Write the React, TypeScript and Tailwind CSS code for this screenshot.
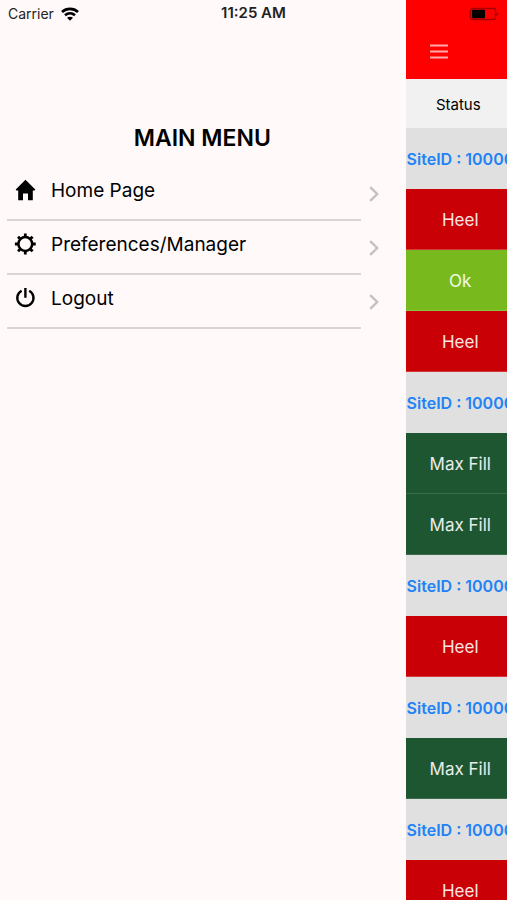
import type { ReactNode } from "react";

type Row = { kind: "site" | "heel" | "ok" | "max"; label: string };

const site: Row = { kind: "site", label: "SiteID : 10000" };
const heel: Row = { kind: "heel", label: "Heel" };
const ok: Row = { kind: "ok", label: "Ok" };
const max: Row = { kind: "max", label: "Max Fill" };

const rows: Row[] = [site, heel, ok, heel, site, max, max, site, heel, site, max, site, heel];

const tone: Record<Row["kind"], string> = {
  site: "bg-[#e0e0e0] pl-px text-left text-base font-semibold text-[#2182f5]",
  heel: "border-[#d33a3a] bg-[#c90005] pt-1 pl-2 text-center text-[17px] text-white/90",
  ok: "border-[#8cc63f] bg-[#78ba1e] pt-1 pl-2 text-center text-[17px] text-white/90",
  max: "border-[#3c6d4b] bg-[#1f5632] pt-1 pl-2 text-center text-[17px] text-white/90",
};

function HomeIcon() {
  return (
    <svg viewBox="0 0 22 22" className="size-[22px]" fill="currentColor" aria-hidden="true">
      <path d="M11.5.8 21.3 10.4 20.6 11.4H18.8V21.2H14V14.4H9V21.2H4.2V11.4H2.4L1.7 10.4z" />
    </svg>
  );
}

function GearIcon() {
  return (
    <svg viewBox="0 0 22 22" className="size-[22px]" fill="none" stroke="currentColor" aria-hidden="true">
      <circle cx="11.3" cy="11" r="6.9" strokeWidth="2.5" />
      <path
        strokeWidth="2.8"
        d="M11.3.6v3.6M11.3 17.8v3.6M.9 11h3.6M18.1 11h3.6M4 3.7l2.4 2.4M16.2 15.9l2.4 2.4M4 18.3l2.4-2.4M16.2 6.1l2.4-2.4"
      />
    </svg>
  );
}

function PowerIcon() {
  return (
    <svg viewBox="0 0 22 22" className="size-[22px]" fill="none" stroke="currentColor" strokeWidth="2.4" aria-hidden="true">
      <path d="M7.6 3.7a8.1 8.1 0 1 0 7.6 0M11.4 1v9.8" />
    </svg>
  );
}

function MenuItem({ icon, label }: { icon: ReactNode; label: string }) {
  return (
    <li>
      <a href="#" className="flex h-[54px] items-stretch">
        <span className="flex grow items-start gap-[15px] border-b-2 border-[#d9d5d5] pt-3 pl-[7px]">
          {icon}
          <span className="text-[19px] leading-6">{label}</span>
        </span>
        <svg
          viewBox="0 0 10 16"
          className="mt-[19px] mr-[27px] ml-2 h-4 w-[10px]"
          fill="none"
          stroke="#c4c1c1"
          strokeWidth="2.4"
          aria-hidden="true"
        >
          <path d="M1.2 1.2 8.2 8 1.2 14.8" />
        </svg>
      </a>
    </li>
  );
}

function StatusBar() {
  return (
    <div className="absolute inset-x-0 top-0 grid h-[27px] grid-cols-3 items-center px-2 text-[#222]">
      <span className="flex items-center gap-[7px] text-sm">
        Carrier
        <svg viewBox="0 0 18 14" className="h-[14px] w-[18px]" fill="none" stroke="#000" aria-label="Wi-Fi">
          <path strokeWidth="2.7" d="M1 4.9C5.5.8 12.5.8 17 4.9M4 8.3c2.9-2.5 7.1-2.5 10 0" />
          <path fill="#000" stroke="none" d="M9 13.8 6 10.8c1.7-1.5 4.3-1.5 6 0z" />
        </svg>
      </span>
      <time className="text-center text-[15px] font-semibold">11:25 AM</time>
      <svg viewBox="0 0 30 14" className="h-[14px] w-[30px] justify-self-end" aria-label="Battery">
        <rect x="1.5" y="1.5" width="25" height="11" rx="2" fill="none" stroke="#a80000" strokeWidth="1.4" />
        <rect x="3" y="2.8" width="13" height="8.4" rx="1" fill="#000" />
        <path d="M27.4 4.5 29.6 7l-2.2 2.5z" fill="#a80000" />
      </svg>
    </div>
  );
}

export default function App() {
  return (
    <div className="relative flex h-screen overflow-hidden bg-[#fff9f9] font-['Inter',sans-serif] text-black">
      <nav className="w-4/5 shrink-0 pt-[122px] pl-[7px]" aria-label="Main menu">
        <h1 className="pr-2 text-center text-[23px] leading-8 font-semibold">MAIN MENU</h1>
        <ul className="mt-[13px]">
          <MenuItem icon={<HomeIcon />} label="Home Page" />
          <MenuItem icon={<GearIcon />} label="Preferences/Manager" />
          <MenuItem icon={<PowerIcon />} label="Logout" />
        </ul>
      </nav>
      <main className="min-w-0 grow overflow-hidden">
        <header className="h-[79px] bg-[#ff0000] pt-[44px] pl-6">
          <button type="button" aria-label="Toggle menu" className="block">
            <svg viewBox="0 0 18 16" className="h-4 w-[18px]" stroke="#ffaaaa" strokeWidth="2" aria-hidden="true">
              <path d="M0 1.5h18M0 7.5h18M0 13.5h18" />
            </svg>
          </button>
        </header>
        <table className="w-full table-fixed border-separate border-spacing-0">
          <thead>
            <tr>
              <th className="h-[49px] bg-[#f1f1f1] p-0 pt-1 pl-1 text-center text-[15px] font-normal">Status</th>
            </tr>
          </thead>
          <tbody>
            {rows.map((row, i) => (
              <tr key={i}>
                {row.kind === "site" ? (
                  <td className={`h-[61px] overflow-hidden p-0 whitespace-nowrap ${tone.site}`}>{row.label}</td>
                ) : (
                  <td className={`h-[61px] border-b p-0 whitespace-nowrap ${tone[row.kind]}`}>{row.label}</td>
                )}
              </tr>
            ))}
          </tbody>
        </table>
      </main>
      <StatusBar />
    </div>
  );
}
